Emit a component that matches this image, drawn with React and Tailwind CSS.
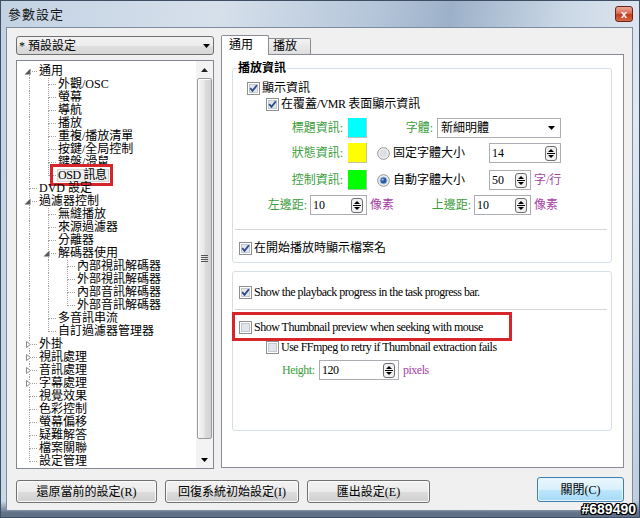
import React from 'react';

const DOT = { stroke: '#a0a0a0', strokeDasharray: '1 1' };

function Conn({ top = true, bottom = true, toggle }) {
  return (
    <svg width="19" height="13" className="block shrink-0" shapeRendering="crispEdges">
      {top && <line x1="9.5" y1="0" x2="9.5" y2={toggle ? 3 : 7} {...DOT} />}
      {bottom && <line x1="9.5" y1={toggle ? 10 : 7} x2="9.5" y2="13" {...DOT} />}
      <line x1={toggle ? 12 : 10} y1="6.5" x2="18" y2="6.5" {...DOT} />
      {toggle === 'open' && <path d="M10.5 3.5 L10.5 9.5 L4.5 9.5 Z" fill="#595959" shapeRendering="auto" />}
      {toggle === 'closed' && <path d="M6.5 3.5 L10.5 6.5 L6.5 9.5 Z" fill="#ffffff" stroke="#8a8a8a" shapeRendering="auto" />}
    </svg>
  );
}

function Guide({ on }) {
  return (
    <svg width="19" height="13" className="block shrink-0" shapeRendering="crispEdges">
      {on ? <line x1="9.5" y1="0" x2="9.5" y2="13" {...DOT} /> : null}
    </svg>
  );
}

const TREE = [
  { t: '通用', g: [], tg: 'open', first: true },
  { t: '外觀/OSC', g: [1] },
  { t: '螢幕', g: [1] },
  { t: '導航', g: [1] },
  { t: '播放', g: [1] },
  { t: '重複/播放清單', g: [1] },
  { t: '按鍵/全局控制', g: [1] },
  { t: '鍵盤/滑鼠', g: [1] },
  { t: 'OSD 訊息', g: [1], last: true, sel: true },
  { t: 'DVD 設定', g: [] },
  { t: '過濾器控制', g: [], tg: 'open' },
  { t: '無縫播放', g: [1] },
  { t: '來源過濾器', g: [1] },
  { t: '分離器', g: [1] },
  { t: '解碼器使用', g: [1], tg: 'open' },
  { t: '內部視訊解碼器', g: [1, 1] },
  { t: '外部視訊解碼器', g: [1, 1] },
  { t: '內部音訊解碼器', g: [1, 1] },
  { t: '外部音訊解碼器', g: [1, 1], last: true },
  { t: '多音訊串流', g: [1] },
  { t: '自訂過濾器管理器', g: [1], last: true },
  { t: '外掛', g: [], tg: 'closed' },
  { t: '視訊處理', g: [], tg: 'closed' },
  { t: '音訊處理', g: [], tg: 'closed' },
  { t: '字幕處理', g: [], tg: 'closed' },
  { t: '視覺效果', g: [] },
  { t: '色彩控制', g: [] },
  { t: '螢幕偏移', g: [] },
  { t: '疑難解答', g: [] },
  { t: '檔案關聯', g: [] },
  { t: '設定管理', g: [], last: true },
];

function Check({ checked }) {
  return (
    <svg width="13" height="13" className="block shrink-0" shapeRendering="crispEdges">
      <rect x="0.5" y="0.5" width="12" height="12" fill="#ffffff" stroke="#8e8f8f" />
      <rect x="2" y="2" width="9" height="9" fill="#e2e6eb" />
      <rect x="2.5" y="2.5" width="8" height="8" fill="none" stroke="#c3c9d1" />
      {checked && (
        <path d="M3.2 6.2 L5.5 8.9 L9.9 3.2" fill="none" stroke="#2d4a8c" strokeWidth="1.8" shapeRendering="auto" />
      )}
    </svg>
  );
}

function Radio({ checked }) {
  return (
    <svg width="13" height="13" className="block shrink-0">
      <circle cx="6.5" cy="6.5" r="5.8" fill="#f5f5f5" stroke="#8e8f8f" />
      <circle cx="6.5" cy="6.5" r="4" fill={checked ? '#a9c6e8' : '#dcdfe3'} />
      {checked && <circle cx="6.5" cy="6.5" r="3" fill="#2c5b99" />}
      {checked && <circle cx="5.6" cy="5.6" r="1.2" fill="#8fb6e6" />}
    </svg>
  );
}

function Spin() {
  return (
    <svg width="12" height="15" className="block shrink-0">
      <rect x="0.5" y="0.5" width="11" height="14" rx="2.5" fill="#f0f0f0" stroke="#6f6f6f" />
      <path d="M3 6 L6 3 L9 6 Z" fill="#000" />
      <rect x="2" y="7" width="8" height="1" fill="#000" />
      <path d="M3 9 L9 9 L6 12 Z" fill="#000" />
    </svg>
  );
}

function Field({ value, w }) {
  return (
    <div className={'flex items-center h-[20px] border border-[#abadb3] bg-white pl-[2px] pr-[3px] shrink-0 ' + w}>
      <span className="leading-[18px]">{value}</span>
      <span className="ml-auto">
        <Spin />
      </span>
    </div>
  );
}

function Arrow() {
  return (
    <svg width="7" height="4" className="block shrink-0">
      <path d="M0 0 L7 0 L3.5 4 Z" fill="#000" />
    </svg>
  );
}

const GREEN = 'text-[#3d9d3d]';
const PURPLE = 'text-[#a43fa4]';
const BTN =
  'h-[23px] mt-[3px] rounded-[3px] border border-[#707070] bg-[linear-gradient(#f2f2f2_0%,#ebebeb_50%,#dddddd_51%,#cfcfcf_100%)] shadow-[inset_0_0_0_1px_#fbfbfb] flex items-center justify-center leading-none shrink-0';

export default function App() {
  return (
    <div className="w-[640px] h-[518px] relative flex flex-col border border-[#3f4f63] overflow-hidden text-[12px] text-black [font-family:'Liberation_Serif','Noto_Sans_CJK_TC',serif] bg-[linear-gradient(to_bottom,transparent_0px,transparent_500px,#5f7087_512px),linear-gradient(100deg,#c3d2e3_0%,#d6e0eb_30%,#b4c5d9_52%,#9cb1c9_62%,#cbd8e6_78%,#e0e8f1_90%,#bccbdc_100%)]">
      {/* Title bar */}
      <div className="h-[26px] shrink-0 flex items-center pl-[7px] pr-[6px]">
        <span className="text-[13px] tracking-[1px] text-[#1a1a1a] [font-family:'Noto_Sans_CJK_TC',sans-serif]">參數設定</span>
        <div className="ml-auto w-[18px] h-[16px] rounded-[3px] border border-[#6e2418] bg-[linear-gradient(#eaa898_0%,#d86d52_45%,#c23b1c_55%,#d56a48_100%)] flex items-center justify-center text-white text-[11px] font-bold leading-none [font-family:'Liberation_Sans',sans-serif]">
          x
        </div>
      </div>

      {/* Client */}
      <div className="flex-1 ml-[5px] mr-[6px] mb-[6px] border border-[#7d8ca0] bg-[#f0f0f0] flex flex-col pt-[7px] pl-[9px] pr-[8px]">
        <div className="h-[434px] flex gap-[7px] shrink-0">
          {/* Left column */}
          <div className="w-[198px] flex flex-col shrink-0">
            <div className="h-[19px] mt-px rounded-[3px] border border-[#707070] bg-[linear-gradient(#f3f3f3_0%,#ececec_50%,#e0e0e0_51%,#d6d6d6_100%)] flex items-center pl-[2px] pr-[3px]">
              <span className="leading-none">* 預設設定</span>
              <span className="ml-auto">
                <Arrow />
              </span>
            </div>
            <div className="mt-[5px] h-[409px] border border-[#828790] bg-white flex">
              <div className="flex-1 pl-[3px] pt-[4px] overflow-hidden">
                {TREE.map((r, i) => (
                  <div key={i} className="flex h-[13px] items-center">
                    {r.g.map((v, j) => (
                      <Guide key={j} on={v} />
                    ))}
                    <Conn top={!r.first} bottom={!r.last} toggle={r.tg} />
                    <span
                      className={
                        'relative -ml-px pl-px pr-[2px] leading-[13px] whitespace-nowrap ' +
                        (r.sel ? 'bg-[#efefef] shadow-[inset_0_0_0_1px_#d4d4d4] tracking-[-0.4px]' : '')
                      }
                    >
                      {r.t}
                      {r.sel && (
                        <span className="absolute -left-[7px] -right-[4px] -top-[5px] -bottom-[4px] border-[3px] border-[#d7262b]" />
                      )}
                    </span>
                  </div>
                ))}
              </div>
              {/* Scrollbar */}
              <div className="w-[17px] flex flex-col bg-[#f3f3f3] shrink-0">
                <div className="h-[17px] flex items-center justify-center">
                  <svg width="7" height="4" className="block">
                    <path d="M0 4 L3.5 0 L7 4 Z" fill="#222" />
                  </svg>
                </div>
                <div className="flex-1 px-px">
                  <div className="h-[361px] rounded-[2px] border border-[#9a9a9a] bg-[linear-gradient(90deg,#f4f4f4_0%,#eaeaea_45%,#dcdcdc_55%,#d2d2d2_100%)] shadow-[inset_1px_1px_0_#ffffff] flex items-center justify-center">
                    <svg width="7" height="8" className="block">
                      <rect x="0" y="0" width="7" height="1" fill="#555" />
                      <rect x="0" y="2" width="7" height="1" fill="#555" />
                      <rect x="0" y="4" width="7" height="1" fill="#555" />
                      <rect x="0" y="6" width="7" height="1" fill="#555" />
                    </svg>
                  </div>
                </div>
                <div className="h-[17px] flex items-center justify-center">
                  <Arrow />
                </div>
              </div>
            </div>
          </div>

          {/* Right column */}
          <div className="w-[403px] flex flex-col shrink-0">
            <div className="h-[19px] flex items-end shrink-0">
              <div className="relative z-10 -mb-px h-[20px] w-[48px] bg-white border border-b-0 border-[#898c95] rounded-t-[2px] pl-[7px] leading-[18px]">
                通用
              </div>
              <div className="h-[16px] w-[42px] border border-l-0 border-b-0 border-[#898c95] rounded-tr-[2px] bg-[linear-gradient(#f3f3f3,#dedede)] pl-[4px] leading-[15px]">
                播放
              </div>
            </div>
            <div className="h-[414px] border border-[#898c95] bg-white pt-[13px] pl-[10px] pr-[11px] flex flex-col">
              {/* Group 1 */}
              <div className="h-[195px] border border-[#d5dfe5] rounded-[3px] flex flex-col shrink-0">
                <div className="-mt-[7px] ml-[4px] px-px bg-white w-fit leading-[13px] font-semibold">播放資訊</div>
                <div className="mt-[7px] h-[13px] flex items-center pl-[14px] gap-[2px]">
                  <Check checked />
                  <span className="leading-[13px]">顯示資訊</span>
                </div>
                <div className="mt-[3px] h-[13px] flex items-center pl-[33px] gap-[2px]">
                  <Check checked />
                  <span className="leading-[13px]">
                    在覆蓋<span className="tracking-[-0.6px]">/VMR</span> 表面顯示資訊
                  </span>
                </div>
                {/* Row C */}
                <div className="mt-[7px] h-[20px] flex items-center">
                  <span className={'w-[110px] text-right shrink-0 ' + GREEN}>標題資訊:</span>
                  <span className="ml-[5px] w-[19px] h-[20px] bg-[#00ffff] shadow-[inset_-1px_-1px_0_#b5c4c4] shrink-0" />
                  <span className={'w-[66px] text-right shrink-0 ' + GREEN}>字體:</span>
                  <div className="ml-[4px] w-[124px] h-[20px] border border-[#abadb3] bg-white flex items-center pl-[3px] pr-[5px] shrink-0">
                    <span className="leading-none">新細明體</span>
                    <span className="ml-auto">
                      <Arrow />
                    </span>
                  </div>
                </div>
                {/* Row D */}
                <div className="mt-[5px] h-[20px] flex items-center">
                  <span className={'w-[110px] text-right shrink-0 ' + GREEN}>狀態資訊:</span>
                  <span className="ml-[5px] w-[19px] h-[20px] bg-[#ffff00] shadow-[inset_-1px_-1px_0_#c4c4a0] shrink-0" />
                  <span className="ml-[10px]">
                    <Radio />
                  </span>
                  <span className="ml-[3px] w-[96px] shrink-0">固定字體大小</span>
                  <Field value="14" w="w-[72px]" />
                </div>
                {/* Row E */}
                <div className="mt-[7px] h-[20px] flex items-center">
                  <span className={'w-[110px] text-right shrink-0 ' + GREEN}>控制資訊:</span>
                  <span className="ml-[5px] w-[19px] h-[20px] bg-[#00ff00] shadow-[inset_-1px_-1px_0_#9cc49c] shrink-0" />
                  <span className="ml-[10px]">
                    <Radio checked />
                  </span>
                  <span className="ml-[3px] w-[96px] shrink-0">自動字體大小</span>
                  <Field value="50" w="w-[42px]" />
                  <span className={'ml-[3px] ' + PURPLE}>字/行</span>
                </div>
                {/* Row F */}
                <div className="mt-[5px] h-[20px] flex items-center">
                  <span className={'w-[74px] text-right shrink-0 ' + GREEN}>左邊距:</span>
                  <span className="ml-[3px]">
                    <Field value="10" w="w-[57px]" />
                  </span>
                  <span className={'ml-[3px] w-[24px] shrink-0 ' + PURPLE}>像素</span>
                  <span className={'w-[77px] text-right shrink-0 ' + GREEN}>上邊距:</span>
                  <span className="ml-[3px]">
                    <Field value="10" w="w-[57px]" />
                  </span>
                  <span className={'ml-[3px] ' + PURPLE}>像素</span>
                </div>
                <div className="mt-[14px] ml-[2px] mr-[4px] h-px bg-[#d5d5d5] shrink-0" />
                <div className="mt-[12px] h-[13px] flex items-center pl-[6px] gap-[2px]">
                  <Check checked />
                  <span className="leading-[13px]">在開始播放時顯示檔案名</span>
                </div>
              </div>

              {/* Group 2 */}
              <div className="mt-[8px] h-[160px] border border-[#d5dfe5] rounded-[3px] flex flex-col shrink-0 tracking-[-0.5px]">
                <div className="mt-[14px] h-[13px] flex items-center pl-[6px] gap-[2px]">
                  <Check checked />
                  <span className="leading-[13px]">Show the playback progress in the task progress bar.</span>
                </div>
                <div className="mt-[10px] ml-[2px] mr-[4px] h-px bg-[#d5d5d5] shrink-0" />
                <div className="relative mt-[11px] h-[13px] flex items-center pl-[6px] gap-[2px]">
                  <Check />
                  <span className="leading-[13px]">Show Thumbnail preview when seeking with mouse</span>
                  <span className="absolute -left-[1px] -top-[9px] w-[280px] h-[29px] border-[3px] border-[#d7262b]" />
                </div>
                <div className="mt-[7px] h-[13px] flex items-center pl-[33px] gap-[2px]">
                  <Check />
                  <span className="leading-[13px]">Use FFmpeg to retry if Thumbnail extraction fails</span>
                </div>
                <div className="mt-[6px] h-[20px] flex items-center pl-[49px]">
                  <span className={'w-[37px] shrink-0 ' + GREEN}>Height:</span>
                  <Field value="120" w="w-[80px]" />
                  <span className={'ml-[4px] ' + PURPLE}>pixels</span>
                </div>
              </div>
            </div>
          </div>
        </div>

        {/* Buttons */}
        <div className="mt-[8px] h-[25px] flex items-start gap-[8px] shrink-0">
          <div className={BTN + ' w-[141px]'}>還原當前的設定(R)</div>
          <div className={BTN + ' w-[134px]'}>回復系統初始設定(I)</div>
          <div className={BTN + ' w-[123px]'}>匯出設定(E)</div>
          <div className="ml-auto w-[87px] h-[25px] rounded-[3px] border border-[#3c7fb1] bg-[linear-gradient(#eaf6fd_0%,#d9f0fc_50%,#bee6fd_51%,#a7d9f5_100%)] shadow-[inset_0_0_0_1px_#e3f4fc] flex items-center justify-center leading-none shrink-0">
            關閉(C)
          </div>
        </div>
      </div>

      <div className="absolute right-[3px] bottom-0 text-[14px] font-bold text-white leading-[15px] [font-family:'Liberation_Sans',sans-serif] [text-shadow:-1px_0_#000,1px_0_#000,0_-1px_#000,0_1px_#000,-1px_-1px_#000,1px_1px_#000,-1px_1px_#000,1px_-1px_#000]">
        #689490
      </div>
    </div>
  );
}
